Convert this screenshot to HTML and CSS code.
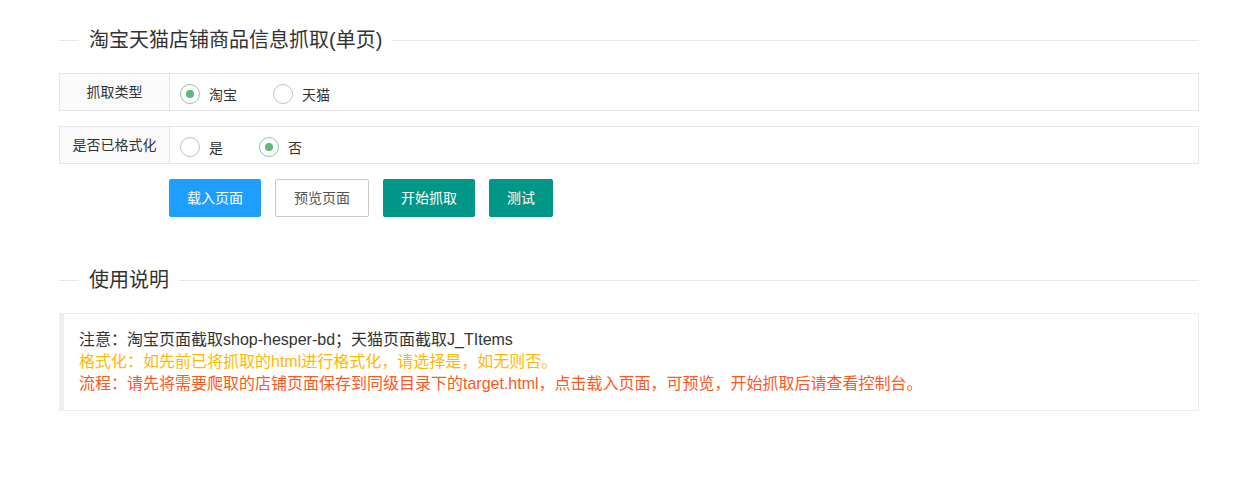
FILE: index.html
```html
<!DOCTYPE html>
<html lang="zh-CN">
<head>
<meta charset="utf-8">
<title>淘宝天猫店铺商品信息抓取(单页)</title>
<link rel="stylesheet" href="styles.css">
</head>
<body>
<div class="page">
  <div class="field-title"><span class="legend">淘宝天猫店铺商品信息抓取(单页)</span></div>
  <form class="form">
    <div class="form-item">
      <div class="form-label">抓取类型</div>
      <div class="form-block">
        <span class="radio checked"><i class="radio-icon"></i>淘宝</span>
        <span class="radio"><i class="radio-icon"></i>天猫</span>
      </div>
    </div>
    <div class="form-item">
      <div class="form-label">是否已格式化</div>
      <div class="form-block">
        <span class="radio"><i class="radio-icon"></i>是</span>
        <span class="radio checked"><i class="radio-icon"></i>否</span>
      </div>
    </div>
    <div class="btn-row">
      <button type="button" class="btn btn-normal">载入页面</button>
      <button type="button" class="btn btn-primary">预览页面</button>
      <button type="button" class="btn">开始抓取</button>
      <button type="button" class="btn">测试</button>
    </div>
  </form>
  <div class="field-title second"><span class="legend">使用说明</span></div>
  <div class="quote">
    <p class="line">注意：淘宝页面截取shop-hesper-bd；天猫页面截取J_TItems</p>
    <p class="line orange">格式化：如先前已将抓取的html进行格式化，请选择是，如无则否。</p>
    <p class="line red">流程：请先将需要爬取的店铺页面保存到同级目录下的target.html，点击载入页面，可预览，开始抓取后请查看控制台。</p>
  </div>
</div>
</body>
</html>
```

FILE: styles.css
```css
html, body {
  margin: 0;
  padding: 0;
  background: #fff;
}

body {
  font-family: "Liberation Sans", "Noto Sans CJK SC", sans-serif;
  color: #333;
  font-size: 14px;
}

.page {
  margin-left: 59px;
  width: 1140px;
  padding-top: 28px;
}

.field-title {
  display: flex;
  align-items: center;
  height: 24px;
  line-height: 24px;
  font-size: 20px;
  color: #333;
}

.field-title::before {
  content: "";
  width: 20px;
  height: 1px;
  background: #e6e6e6;
}

.field-title::after {
  content: "";
  flex: 1;
  height: 1px;
  background: #e6e6e6;
}

.legend {
  padding: 0 10px;
}

.form {
  margin: 21px 0 0;
}

.form-item {
  display: flex;
  height: 38px;
  box-sizing: border-box;
  border: 1px solid #e6e6e6;
  margin-bottom: 15px;
}

.form-label {
  width: 110px;
  box-sizing: border-box;
  border-right: 1px solid #e6e6e6;
  background: #fafafa;
  text-align: center;
  line-height: 36px;
  font-size: 14px;
  color: #333;
}

.form-block {
  display: flex;
  align-items: center;
  padding: 4px 0 0 10px;
  box-sizing: border-box;
}

.radio {
  display: flex;
  align-items: center;
  margin-right: 36px;
  font-size: 14px;
  color: #333;
}

.radio-icon {
  position: relative;
  width: 20px;
  height: 20px;
  box-sizing: border-box;
  border: 1px solid #c2c2c2;
  border-radius: 50%;
  margin-right: 9px;
}

.radio.checked .radio-icon {
  border-color: #8cc9a0;
}

.radio.checked .radio-icon::after {
  content: "";
  position: absolute;
  left: 5px;
  top: 5px;
  width: 8px;
  height: 8px;
  border-radius: 50%;
  background: #5fb878;
}

.btn-row {
  display: flex;
  gap: 14px;
  padding-left: 110px;
}

.btn {
  height: 38px;
  line-height: 38px;
  padding: 0 18px;
  border: none;
  border-radius: 2px;
  background: #009688;
  color: #fff;
  font-family: inherit;
  font-size: 14px;
  margin: 0;
  cursor: pointer;
}

.btn-normal {
  background: #1e9fff;
}

.btn-primary {
  background: #fff;
  color: #555;
  border: 1px solid #c9c9c9;
  line-height: 36px;
}

.field-title.second {
  margin-top: 51px;
}

.quote {
  margin-top: 21px;
  border: 1px solid #eee;
  border-left: 5px solid #eee;
  padding: 15px;
  font-size: 16px;
  line-height: 22px;
}

.line {
  margin: 0;
  color: #333;
  white-space: nowrap;
}

.line.orange {
  color: #ffb800;
}

.line.red {
  color: #ff5722;
}
```
